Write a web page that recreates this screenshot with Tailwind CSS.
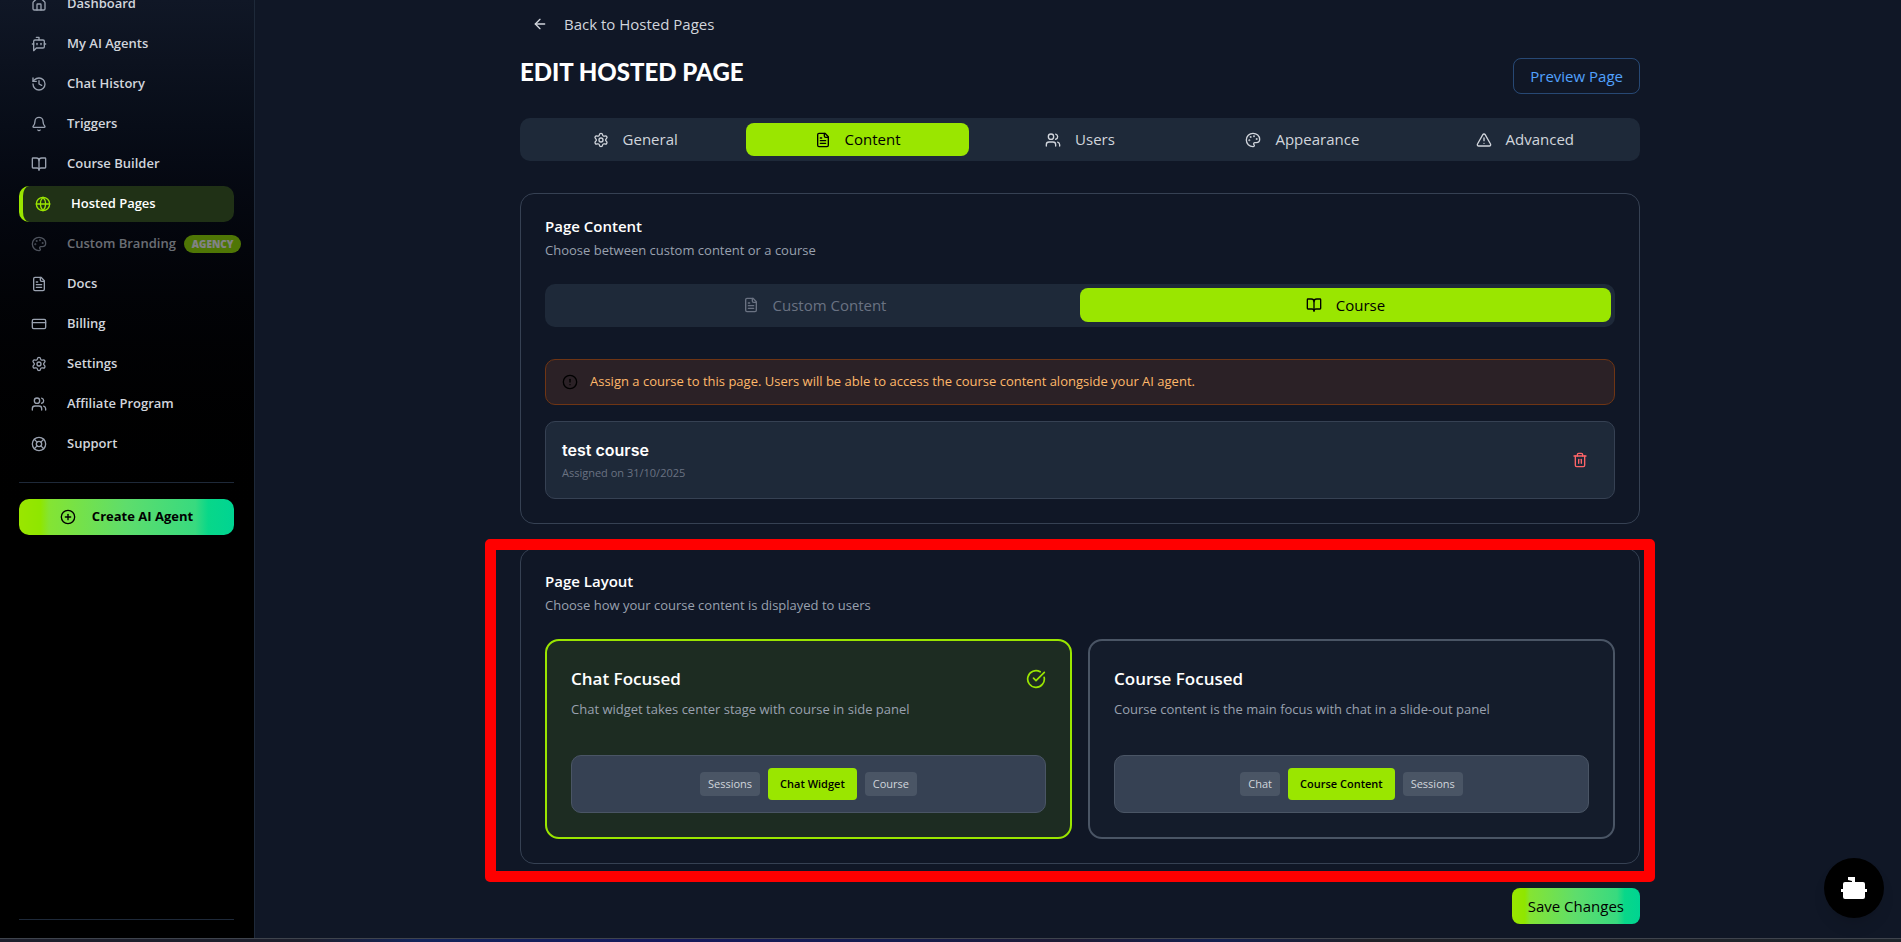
<!DOCTYPE html>
<html lang="en">
<head>
    <meta charset="utf-8">
    <meta name="viewport" content="width=device-width, initial-scale=1">
    <title>Edit Hosted Page</title>
    <script src="https://cdn.jsdelivr.net/npm/@tailwindcss/browser@4"></script>
</head>
<body class="bg-[#101726] text-[15px] text-gray-300 font-['Open_Sans','Noto_Sans',sans-serif]">

    <!-- icon sprite -->
    <svg class="hidden">
        <symbol id="house" viewBox="0 0 24 24"><path d="M15 21v-8a1 1 0 0 0-1-1h-4a1 1 0 0 0-1 1v8"/><path d="M3 10a2 2 0 0 1 .709-1.528l7-6a2 2 0 0 1 2.582 0l7 6A2 2 0 0 1 21 10v9a2 2 0 0 1-2 2H5a2 2 0 0 1-2-2z"/></symbol>
        <symbol id="bot" viewBox="0 0 24 24"><path d="M12 6V2H8"/><path d="m8 18-4 4V8a2 2 0 0 1 2-2h12a2 2 0 0 1 2 2v8a2 2 0 0 1-2 2Z"/><path d="M2 12h2"/><path d="M9 11v2"/><path d="M15 11v2"/><path d="M20 12h2"/></symbol>
        <symbol id="history" viewBox="0 0 24 24"><path d="M3 12a9 9 0 1 0 9-9 9.75 9.75 0 0 0-6.74 2.74L3 8"/><path d="M3 3v5h5"/><path d="M12 7v5l4 2"/></symbol>
        <symbol id="bell" viewBox="0 0 24 24"><path d="M10.268 21a2 2 0 0 0 3.464 0"/><path d="M3.262 15.326A1 1 0 0 0 4 17h16a1 1 0 0 0 .74-1.673C19.41 13.956 18 12.499 18 8A6 6 0 0 0 6 8c0 4.499-1.411 5.956-2.738 7.326"/></symbol>
        <symbol id="book" viewBox="0 0 24 24"><path d="M12 7v14"/><path d="M3 18a1 1 0 0 1-1-1V4a1 1 0 0 1 1-1h5a4 4 0 0 1 4 4 4 4 0 0 1 4-4h5a1 1 0 0 1 1 1v13a1 1 0 0 1-1 1h-6a3 3 0 0 0-3 3 3 3 0 0 0-3-3z"/></symbol>
        <symbol id="globe" viewBox="0 0 24 24"><circle cx="12" cy="12" r="10"/><path d="M12 2a14.5 14.5 0 0 0 0 20 14.5 14.5 0 0 0 0-20"/><path d="M2 12h20"/></symbol>
        <symbol id="palette" viewBox="0 0 24 24"><path d="M12 22a1 1 0 0 1 0-20 10 9 0 0 1 10 9 5 5 0 0 1-5 5h-2.25a1.75 1.75 0 0 0-1.4 2.8l.3.4a1.75 1.75 0 0 1-1.4 2.8z"/><circle cx="13.5" cy="6.5" r=".5" fill="currentColor"/><circle cx="17.5" cy="10.5" r=".5" fill="currentColor"/><circle cx="6.5" cy="12.5" r=".5" fill="currentColor"/><circle cx="8.5" cy="7.5" r=".5" fill="currentColor"/></symbol>
        <symbol id="file" viewBox="0 0 24 24"><path d="M15 2H6a2 2 0 0 0-2 2v16a2 2 0 0 0 2 2h12a2 2 0 0 0 2-2V7Z"/><path d="M14 2v4a2 2 0 0 0 2 2h4"/><path d="M10 9H8"/><path d="M16 13H8"/><path d="M16 17H8"/></symbol>
        <symbol id="card" viewBox="0 0 24 24"><rect width="20" height="14" x="2" y="5" rx="2"/><path d="M2 10h20"/></symbol>
        <symbol id="settings" viewBox="0 0 24 24"><path d="M9.671 4.136a2.34 2.34 0 0 1 4.659 0 2.34 2.34 0 0 0 3.319 1.915 2.34 2.34 0 0 1 2.33 4.033 2.34 2.34 0 0 0 0 3.831 2.34 2.34 0 0 1-2.33 4.033 2.34 2.34 0 0 0-3.319 1.915 2.34 2.34 0 0 1-4.659 0 2.34 2.34 0 0 0-3.32-1.915 2.34 2.34 0 0 1-2.33-4.033 2.34 2.34 0 0 0 0-3.831A2.34 2.34 0 0 1 6.35 6.051a2.34 2.34 0 0 0 3.319-1.915"/><circle cx="12" cy="12" r="3"/></symbol>
        <symbol id="users" viewBox="0 0 24 24"><path d="M16 21v-2a4 4 0 0 0-4-4H6a4 4 0 0 0-4 4v2"/><circle cx="9" cy="7" r="4"/><path d="M22 21v-2a4 4 0 0 0-3-3.87"/><path d="M16 3.13a4 4 0 0 1 0 7.75"/></symbol>
        <symbol id="support" viewBox="0 0 24 24"><circle cx="12" cy="12" r="10"/><path d="m4.93 4.93 4.24 4.24"/><path d="m14.83 9.17 4.24-4.24"/><path d="m14.83 14.83 4.24 4.24"/><path d="m9.17 14.83-4.24 4.24"/><circle cx="12" cy="12" r="4"/></symbol>
        <symbol id="plus" viewBox="0 0 24 24"><circle cx="12" cy="12" r="10"/><path d="M8 12h8"/><path d="M12 8v8"/></symbol>
        <symbol id="arrow" viewBox="0 0 24 24"><path d="m12 19-7-7 7-7"/><path d="M19 12H5"/></symbol>
        <symbol id="warning" viewBox="0 0 24 24"><path d="m21.73 18-8-14a2 2 0 0 0-3.48 0l-8 14A2 2 0 0 0 4 21h16a2 2 0 0 0 1.73-3"/><path d="M12 9v4"/><path d="M12 17h.01"/></symbol>
        <symbol id="info" viewBox="0 0 24 24"><circle cx="12" cy="12" r="10"/><path d="M12 8v4"/><path d="M12 16h.01"/></symbol>
        <symbol id="trash" viewBox="0 0 24 24"><path d="M3 6h18"/><path d="M19 6v14a2 2 0 0 1-2 2H7a2 2 0 0 1-2-2V6"/><path d="M8 6V4a2 2 0 0 1 2-2h4a2 2 0 0 1 2 2v2"/><path d="M10 11v6"/><path d="M14 11v6"/></symbol>
        <symbol id="check" viewBox="0 0 24 24"><path d="M21.801 10A10 10 0 1 1 17 3.335"/><path d="m9 11 3 3L22 4"/></symbol>
    </svg>

    <div class="flex h-screen overflow-hidden">
        <!-- Sidebar, scrolled down a little -->
        <aside class="flex w-[255px] shrink-0 flex-col overflow-hidden border-r border-gray-800 bg-linear-to-b from-[#101726] to-black to-60% pr-5 pl-[19px]">
            <nav class="-mt-3.5 space-y-1 text-[13px] font-semibold text-gray-300 [&_svg]:size-4 [&_svg]:shrink-0 [&_svg]:fill-none [&_svg]:stroke-current [&_svg]:stroke-2 [&_svg]:[stroke-linecap:round] [&_svg]:[stroke-linejoin:round]">
                <a href="#" class="flex h-9 items-center gap-5 px-3"><svg class="text-gray-400"><use href="#house"/></svg>Dashboard</a>
                <a href="#" class="flex h-9 items-center gap-5 px-3"><svg class="text-gray-400"><use href="#bot"/></svg>My AI Agents</a>
                <a href="#" class="flex h-9 items-center gap-5 px-3"><svg class="text-gray-400"><use href="#history"/></svg>Chat History</a>
                <a href="#" class="flex h-9 items-center gap-5 px-3"><svg class="text-gray-400"><use href="#bell"/></svg>Triggers</a>
                <a href="#" class="flex h-9 items-center gap-5 px-3"><svg class="text-gray-400"><use href="#book"/></svg>Course Builder</a>
                <a href="#" class="flex h-9 items-center gap-5 rounded-[10px] border-l-4 border-lime-400 bg-[#203116] px-3 text-white"><svg class="text-lime-400"><use href="#globe"/></svg>Hosted Pages</a>
                <a href="#" class="flex h-9 items-center gap-5 pl-3 whitespace-nowrap opacity-50">
                    <svg class="text-gray-400"><use href="#palette"/></svg>
                    <span class="flex items-center gap-2">Custom Branding <span class="rounded-full bg-lime-400 px-2 text-[10px] leading-[18px] font-extrabold text-white">AGENCY</span></span>
                </a>
                <a href="#" class="flex h-9 items-center gap-5 px-3"><svg class="text-gray-400"><use href="#file"/></svg>Docs</a>
                <a href="#" class="flex h-9 items-center gap-5 px-3"><svg class="text-gray-400"><use href="#card"/></svg>Billing</a>
                <a href="#" class="flex h-9 items-center gap-5 px-3"><svg class="text-gray-400"><use href="#settings"/></svg>Settings</a>
                <a href="#" class="flex h-9 items-center gap-5 px-3"><svg class="text-gray-400"><use href="#users"/></svg>Affiliate Program</a>
                <a href="#" class="flex h-9 items-center gap-5 px-3"><svg class="text-gray-400"><use href="#support"/></svg>Support</a>
            </nav>
            <div class="mt-5 border-t border-gray-800 pt-4">
                <button class="flex h-9 w-full items-center justify-center gap-4 rounded-[10px] bg-[linear-gradient(90deg,#9ae600_0%,#8fe600_10%,#84e433_14%,#5edd6c_50%,#38da7f_82%,#08d789_88%,#00d492_100%)] text-[13px] font-bold text-black">
                    <svg class="size-4 fill-none stroke-current stroke-2 [stroke-linecap:round]"><use href="#plus"/></svg>Create AI Agent
                </button>
            </div>
            <div class="mt-auto mb-[22px] border-t border-gray-800"></div>
        </aside>

        <!-- Main -->
        <main class="flex-1 pt-1.5 pl-1 [&_svg]:fill-none [&_svg]:stroke-current [&_svg]:stroke-2 [&_svg]:[stroke-linecap:round] [&_svg]:[stroke-linejoin:round]">
            <div class="mx-auto max-w-6xl px-4">
                <a href="#" class="mb-4 inline-flex h-9 items-center gap-4 px-3"><svg class="size-4"><use href="#arrow"/></svg>Back to Hosted Pages</a>

                <div class="mb-6 flex items-center justify-between">
                    <h1 class="pb-2 font-[Lato] text-2xl leading-7 font-black text-white uppercase">Edit Hosted Page</h1>
                    <button class="h-9 rounded-lg border border-blue-400/35 px-4 text-blue-400">Preview Page</button>
                </div>

                <div role="tablist" class="mb-8 grid grid-cols-5 rounded-[10px] bg-gray-800 px-1 py-[5px]">
                    <button role="tab" class="flex h-[33px] items-center justify-center gap-3.5"><svg class="size-4"><use href="#settings"/></svg>General</button>
                    <button role="tab" aria-selected="true" class="flex h-[33px] items-center justify-center gap-3.5 rounded-lg bg-lime-400 text-black"><svg class="size-4"><use href="#file"/></svg>Content</button>
                    <button role="tab" class="flex h-[33px] items-center justify-center gap-3.5"><svg class="size-4"><use href="#users"/></svg>Users</button>
                    <button role="tab" class="flex h-[33px] items-center justify-center gap-3.5"><svg class="size-4"><use href="#palette"/></svg>Appearance</button>
                    <button role="tab" class="flex h-[33px] items-center justify-center gap-3.5"><svg class="size-4"><use href="#warning"/></svg>Advanced</button>
                </div>

                <section class="mb-6 rounded-[14px] border border-gray-700 p-6">
                    <h2 class="mb-1.5 text-[15px] leading-4 font-semibold text-white">Page Content</h2>
                    <p class="mb-6 text-[13px] leading-5 text-gray-400">Choose between custom content or a course</p>

                    <div role="tablist" class="mb-8 grid grid-cols-2 rounded-[10px] bg-gray-800 p-1 pb-[5px]">
                        <button role="tab" class="flex h-[34px] items-center justify-center gap-3.5 text-gray-500"><svg class="size-4"><use href="#file"/></svg>Custom Content</button>
                        <button role="tab" aria-selected="true" class="flex h-[34px] items-center justify-center gap-3.5 rounded-lg bg-lime-400 text-black"><svg class="size-4"><use href="#book"/></svg>Course</button>
                    </div>

                    <div class="mb-4 flex h-[46px] items-center gap-3 rounded-[10px] border border-[#6f3514] bg-[#2b2126] px-4 text-[13px] text-[#ffb86a]">
                        <svg class="size-4 text-black"><use href="#info"/></svg>
                        Assign a course to this page. Users will be able to access the course content alongside your AI agent.
                    </div>

                    <div class="flex items-center justify-between rounded-[10px] border border-gray-700 bg-gray-800 px-4 py-[15px]">
                        <div>
                            <h3 class="font-[Inter] text-base leading-[26px] font-semibold text-white">test course</h3>
                            <p class="text-[11px] leading-5 text-gray-500">Assigned on 31/10/2025</p>
                        </div>
                        <button aria-label="Remove course" class="p-[10px] text-red-400"><svg class="size-4"><use href="#trash"/></svg></button>
                    </div>
                </section>

                <div class="relative mb-6">
                    <section class="rounded-[14px] border border-gray-700 p-6">
                        <h2 class="mb-1.5 text-[15px] leading-4 font-semibold text-white">Page Layout</h2>
                        <p class="mb-6 text-[13px] leading-5 text-gray-400">Choose how your course content is displayed to users</p>

                        <div class="grid grid-cols-2 gap-4">
                            <button aria-pressed="true" class="rounded-[14px] border-2 border-lime-400 bg-lime-400/10 p-6 text-left">
                                <span class="mb-1.5 flex items-center justify-between text-[17px] leading-7 font-semibold text-white">Chat Focused <svg class="size-5 text-lime-400"><use href="#check"/></svg></span>
                                <span class="mb-9 block text-[13px] leading-5 text-gray-400">Chat widget takes center stage with course in side panel</span>
                                <span class="flex items-center justify-center gap-2 rounded-[10px] border border-gray-600 bg-gray-700 p-3 text-[11px] leading-4">
                                    <span class="rounded bg-gray-600 px-2 py-1">Sessions</span>
                                    <span class="rounded bg-lime-400 px-3 py-2 font-semibold text-black">Chat Widget</span>
                                    <span class="rounded bg-gray-600 px-2 py-1">Course</span>
                                </span>
                            </button>
                            <button aria-pressed="false" class="rounded-[14px] border-2 border-gray-600 bg-gray-800/30 p-6 text-left">
                                <span class="mb-1.5 block text-[17px] leading-7 font-semibold text-white">Course Focused</span>
                                <span class="mb-9 block text-[13px] leading-5 text-gray-400">Course content is the main focus with chat in a slide-out panel</span>
                                <span class="flex items-center justify-center gap-2 rounded-[10px] border border-gray-600 bg-gray-700 p-3 text-[11px] leading-4">
                                    <span class="rounded bg-gray-600 px-2 py-1">Chat</span>
                                    <span class="rounded bg-lime-400 px-3 py-2 font-semibold text-black">Course Content</span>
                                    <span class="rounded bg-gray-600 px-2 py-1">Sessions</span>
                                </span>
                            </button>
                        </div>
                    </section>
                    <!-- highlight frame -->
                    <div class="pointer-events-none absolute -top-[9px] -right-[15px] -bottom-[18px] -left-[35px] rounded-[5px] border-[11px] border-[#ff0000]"></div>
                </div>

                <div class="flex justify-end">
                    <button class="h-9 rounded-lg bg-[linear-gradient(90deg,#9ae600_0%,#8fe600_10%,#84e433_14%,#5edd6c_50%,#38da7f_82%,#08d789_88%,#00d492_100%)] px-4 text-black">Save Changes</button>
                </div>
            </div>
        </main>
    </div>

    <button aria-label="Open chat" class="fixed right-[17px] bottom-6 flex size-[60px] items-center justify-center rounded-full bg-black shadow-lg">
        <svg viewBox="0 0 26 22" class="h-[22px] w-[26px] fill-white"><path d="M7 0h7v5h8a2 2 0 0 1 2 2v5h2v3h-2v5a2 2 0 0 1-2 2H4a2 2 0 0 1-2-2v-5H0v-3h2V7a2 2 0 0 1 2-2h7V4L7 3z"/></svg>
    </button>
    <div class="fixed inset-x-0 bottom-0 h-1 border-t border-[#3f444d] bg-[linear-gradient(90deg,#1d1f2c_0%,#1d1f2c_16%,#12245a_22%,#14195c_35%,#131c4e_47%,#1d1b34_56%,#12204f_64%,#1f2128_72%,#1e242b_100%)]"></div>
</body>
</html>
